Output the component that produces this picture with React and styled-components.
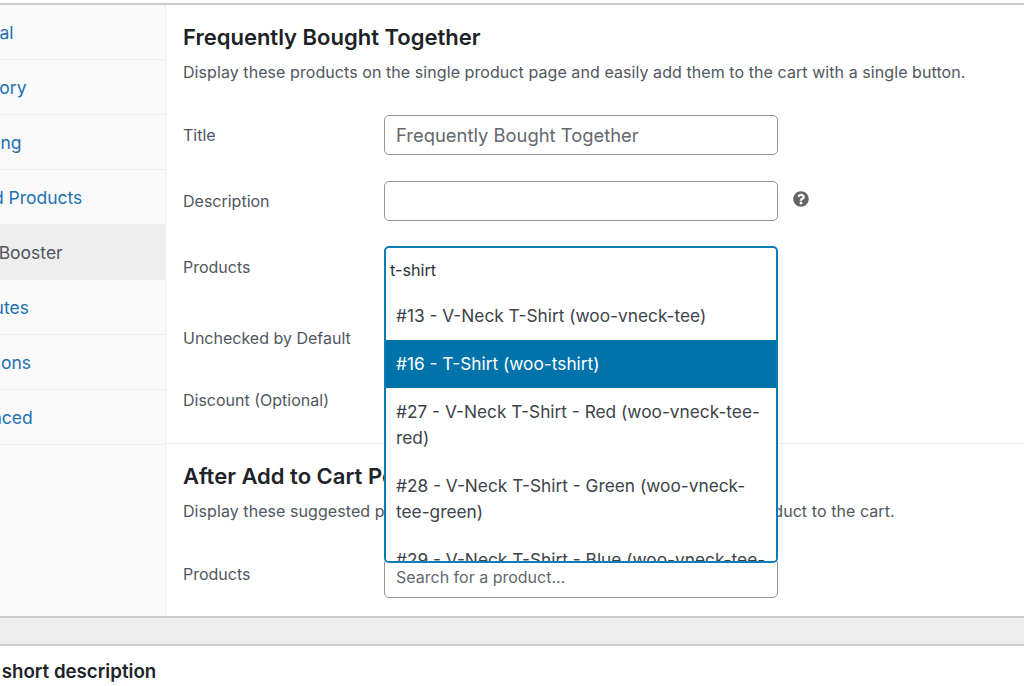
import React from 'react'
import styled, { createGlobalStyle } from 'styled-components'
import { FaQuestionCircle } from 'react-icons/fa'

const GlobalStyle = createGlobalStyle`
  html, body {
    margin: 0;
    padding: 0;
    height: 686px;
    overflow: hidden;
    background: #fff;
    font-family: Inter, "Liberation Sans", sans-serif;
    color: #50575e;
  }
  * { box-sizing: border-box; }
`

const Page = styled.div`
  display: flex;
  flex-direction: column;
  height: 686px;
  overflow: hidden;
  padding-top: 3px;
`

const Panel = styled.div`
  display: flex;
  height: 615px;
  border-top: 2px solid #ccc;
  border-bottom: 2px solid #ccc;
`

const Sidebar = styled.ul`
  width: 166px;
  flex: none;
  margin: 0;
  padding: 0;
  list-style: none;
  background: #fafafa;
  border-right: 1px solid #eee;
  overflow: hidden;
`

const Tab = styled.li`
  height: 55px;
  display: flex;
  align-items: center;
  border-bottom: 1px solid #eee;
  background: ${({ $active }) => ($active ? '#eee' : 'transparent')};
  color: ${({ $active }) => ($active ? '#50575e' : '#2271b1')};
  font-size: 17.5px;
  white-space: nowrap;
  margin-left: -51px;
  width: 217px;
`

const Content = styled.div`
  flex: 1;
  min-width: 0;
`

const Section = styled.section`
  padding: 18px 17px 0;
  height: ${({ $first }) => ($first ? '439px' : 'auto')};
  border-bottom: ${({ $first }) => ($first ? '1px solid #eee' : 'none')};
`

const Heading = styled.h2`
  margin: 0;
  font-size: 22px;
  line-height: 28px;
  font-weight: 600;
  color: #1d2327;
`

const Intro = styled.p`
  margin: ${({ $gap }) => $gap}px 0 0;
  font-size: 16px;
  letter-spacing: 0.07px;
  line-height: 22px;
  white-space: nowrap;
`

const Row = styled.div`
  display: grid;
  grid-template-columns: 201px 394px auto;
  align-items: center;
  margin-top: ${({ $gap }) => $gap}px;
  height: ${({ $h }) => $h}px;
`

const Label = styled.label`
  font-size: 16px;
  line-height: 22px;
  position: relative;
  top: ${({ $shift }) => $shift || 0}px;
`

const Input = styled.div`
  height: 40px;
  border: 1px solid #949494;
  border-radius: 5px;
  background: #fff;
  padding: 0 11px ${({ $small }) => ($small ? '2px' : '0')};
  display: flex;
  align-items: center;
  font-size: ${({ $small }) => ($small ? '16px' : '18.4px')};
  color: #646970;
`

const Help = styled.span`
  display: flex;
  margin-left: 15px;
  color: #666;
  font-size: 16px;
  position: relative;
  top: -2px;
`

const FieldWrap = styled.div`
  position: relative;
`

const Dropdown = styled.div`
  position: absolute;
  z-index: 2;
  top: -1px;
  left: 0;
  width: 394px;
  height: 317px;
  border: 2px solid #0b7db8;
  border-radius: 5px;
  background: #fff;
  overflow: hidden;
`

const SearchText = styled.div`
  height: 44px;
  display: flex;
  align-items: center;
  padding-left: 4px;
  font-size: 16.2px;
  color: #2c3338;
`

const Option = styled.div`
  padding: 11px 10px;
  font-size: 17.3px;
  line-height: 26px;
  background: ${({ $selected }) => ($selected ? '#0073aa' : '#fff')};
  color: ${({ $selected }) => ($selected ? '#fff' : '#3c434a')};
`

const Band = styled.div`
  height: 28px;
  flex: none;
  background: #eee;
  border-bottom: 2px solid #ccc;
`

const ShortDescription = styled.div`
  flex: none;
  font-size: 18.7px;
  line-height: 24px;
  font-weight: 600;
  color: #1d2327;
  margin-left: -74px;
  padding-top: 14px;
  white-space: nowrap;
`

const tabs = ['General', 'Inventory', 'Shipping', 'Linked Products', 'Sales Booster', 'Attributes', 'Variations', 'Advanced']

const options = [
  { id: 13, text: '#13 - V-Neck T-Shirt (woo-vneck-tee)' },
  { id: 16, text: '#16 - T-Shirt (woo-tshirt)', selected: true },
  { id: 27, text: '#27 - V-Neck T-Shirt - Red (woo-vneck-tee-red)' },
  { id: 28, text: '#28 - V-Neck T-Shirt - Green (woo-vneck-tee-green)' },
  { id: 29, text: '#29 - V-Neck T-Shirt - Blue (woo-vneck-tee-blue)' },
]

const App = () => {
  return (
    <Page>
      <GlobalStyle />
      <Panel>
        <Sidebar>
          {tabs.map((tab) => (
            <Tab key={tab} $active={tab === 'Sales Booster'}>{tab}</Tab>
          ))}
        </Sidebar>
        <Content>
          <Section $first>
            <Heading>Frequently Bought Together</Heading>
            <Intro $gap={10}>Display these products on the single product page and easily add them to the cart with a single button.</Intro>
            <Row $gap={32} $h={40}>
              <Label>Title</Label>
              <Input>Frequently Bought Together</Input>
            </Row>
            <Row $gap={26} $h={40}>
              <Label>Description</Label>
              <Input />
              <Help><FaQuestionCircle /></Help>
            </Row>
            <Row $gap={26} $h={40}>
              <Label>Products</Label>
              <FieldWrap>
                <Input />
                <Dropdown>
                  <SearchText>t-shirt</SearchText>
                  {options.map((option) => (
                    <Option key={option.id} $selected={option.selected}>{option.text}</Option>
                  ))}
                </Dropdown>
              </FieldWrap>
            </Row>
            <Row $gap={40} $h={22}>
              <Label>Unchecked by Default</Label>
            </Row>
            <Row $gap={40} $h={22}>
              <Label>Discount (Optional)</Label>
            </Row>
          </Section>
          <Section>
            <Heading>After Add to Cart Popup</Heading>
            <Intro $gap={10}>Display these suggested products in a popup right after a shopper adds a product to the cart.</Intro>
            <Row $gap={36} $h={40}>
              <Label $shift={-4}>Products</Label>
              <Input $small>Search for a product...</Input>
            </Row>
          </Section>
        </Content>
      </Panel>
      <Band />
      <ShortDescription>Product short description</ShortDescription>
    </Page>
  )
}

export default App
